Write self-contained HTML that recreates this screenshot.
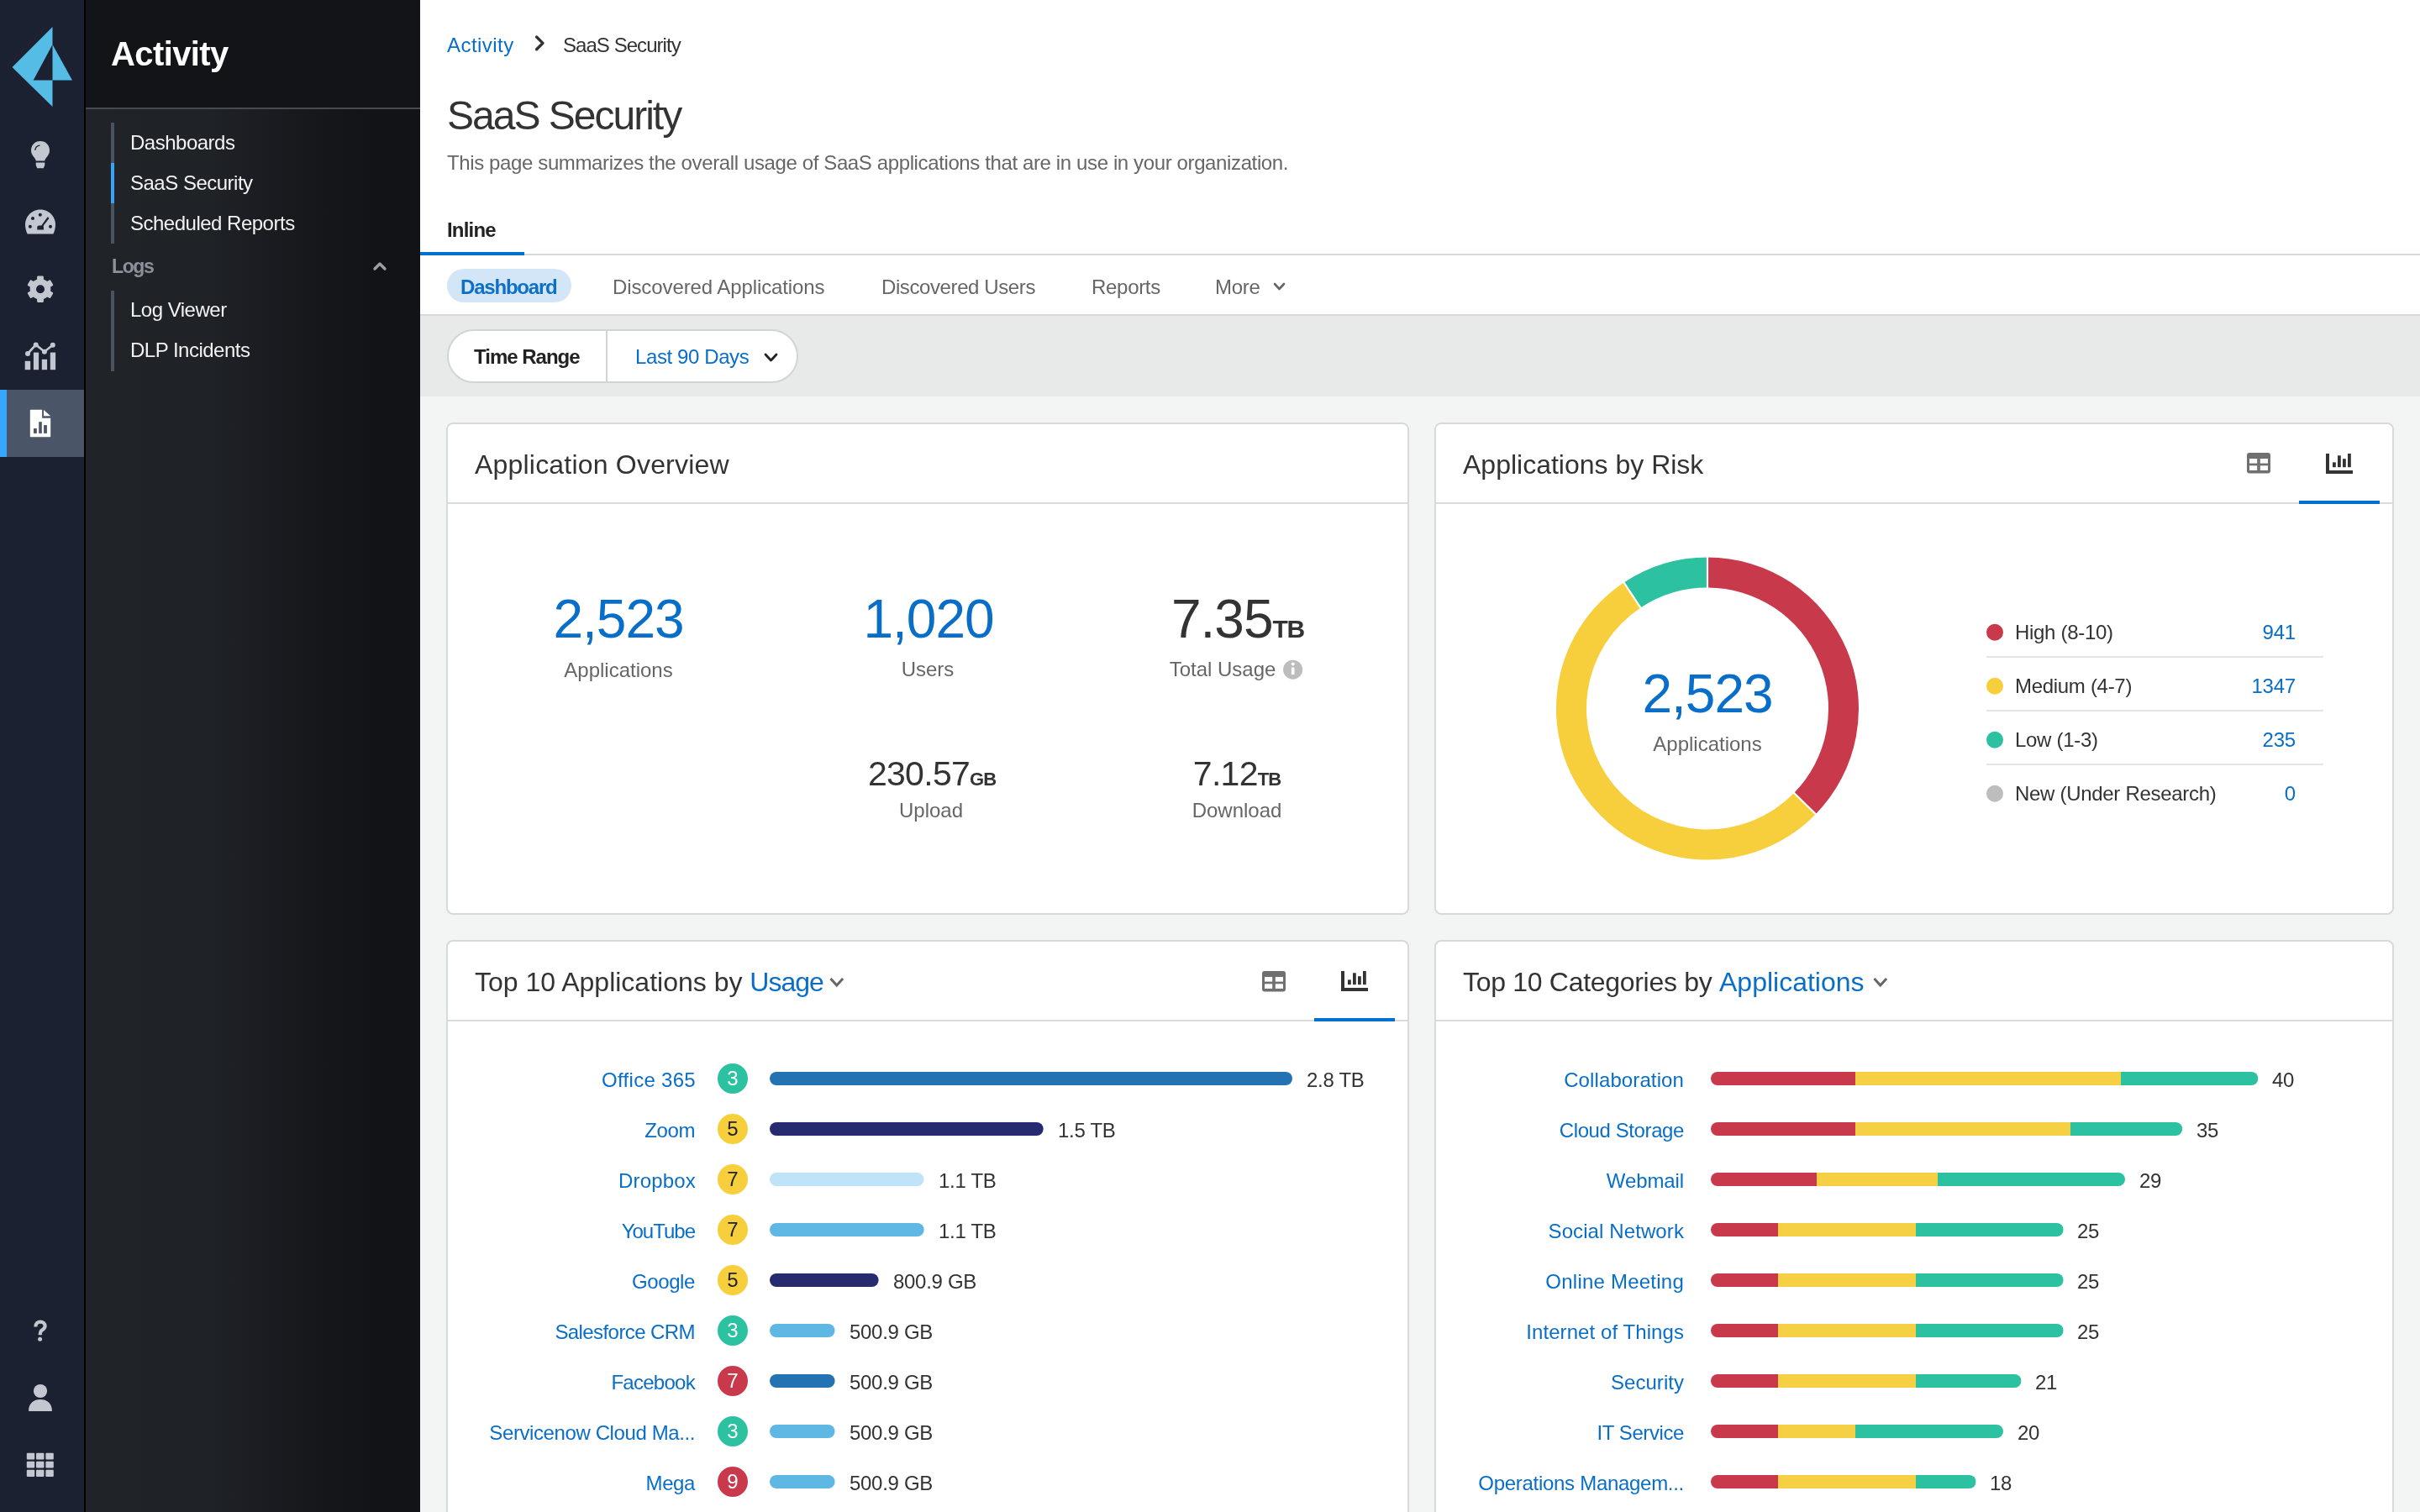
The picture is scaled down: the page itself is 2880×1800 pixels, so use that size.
<!DOCTYPE html>
<html><head><meta charset="utf-8"><title>SaaS Security</title>
<style>
html,body{margin:0;padding:0;}
body{width:2880px;height:1800px;overflow:hidden;position:relative;background:#f3f4f4;font-family:"Liberation Sans", sans-serif;}
.t{position:absolute;white-space:nowrap;line-height:1;will-change:transform;}
.r{position:absolute;}
svg{position:absolute;overflow:visible;}
@media (max-width:2000px){html{zoom:0.5;}}
</style></head><body>

<div class="r" style="left:0px;top:0px;width:100px;height:1800px;background:#1b2130;"></div>
<div class="r" style="left:100px;top:0px;width:2px;height:1800px;background:#000000;"></div>
<svg style="left:0;top:0" width="100" height="140"><path fill="#54bce5" d="M14.5 80 L62.5 32 L62.5 53 L39.7 95.5 L62.5 95.5 L62.5 127 Z"/><path fill="#54bce5" d="M62.5 53 L86 95.5 L62.5 95.5 Z"/></svg>
<div class="r" style="left:0px;top:464px;width:100px;height:80px;background:#4a5567;"></div>
<div class="r" style="left:0px;top:464px;width:8px;height:80px;background:#38a6fe;"></div>
<svg style="left:0;top:144px" width="100" height="80"><path fill="#c3c7cf" d="M48 24 C41.5 24 37 28.8 37 35 C37 38.5 38.6 41 40.5 43.3 C42 45.1 42.7 46.4 42.9 47.6 L53.1 47.6 C53.3 46.4 54 45.1 55.5 43.3 C57.4 41 59 38.5 59 35 C59 28.8 54.5 24 48 24 Z M42.7 49.6 L53.3 49.6 L53.3 52.5 L51.8 56.2 L44.2 56.2 L42.7 52.5 Z"/><path fill="none" stroke="#1b2130" stroke-width="1.3" stroke-linecap="round" d="M41.9 34.4 C42.3 31.5 44.3 29.6 47 29.2"/></svg>
<svg style="left:0;top:224px" width="100" height="80"><path fill="#c3c7cf" d="M48 25.6 C37.8 25.6 30 33.8 30 43.5 C30 47.6 31.1 51.2 32.6 54.4 L63.4 54.4 C64.9 51.2 66 47.6 66 43.5 C66 33.8 58.2 25.6 48 25.6 Z"/><g fill="#1b2130"><circle cx="47.8" cy="31.7" r="2"/><circle cx="39" cy="35.9" r="2"/><circle cx="35.9" cy="45.8" r="2"/><circle cx="60" cy="45.8" r="2"/><path d="M56.6 34.3 L58.6 35.8 L51.8 44.6 L52 49.5 L44.3 49.5 L44.3 46.5 C44.3 45.3 45.2 44.6 46.5 44.6 L49.3 44.6 Z"/></g></svg>
<svg style="left:0;top:304px" width="100" height="80"><g transform="translate(48 40.2)" fill="#c3c7cf"><circle r="12.3"/><rect x="-3.9" y="-15.8" width="7.8" height="8" rx="1.3" transform="rotate(0)"/><rect x="-3.9" y="-15.8" width="7.8" height="8" rx="1.3" transform="rotate(60)"/><rect x="-3.9" y="-15.8" width="7.8" height="8" rx="1.3" transform="rotate(120)"/><rect x="-3.9" y="-15.8" width="7.8" height="8" rx="1.3" transform="rotate(180)"/><rect x="-3.9" y="-15.8" width="7.8" height="8" rx="1.3" transform="rotate(240)"/><rect x="-3.9" y="-15.8" width="7.8" height="8" rx="1.3" transform="rotate(300)"/><circle r="5" fill="#1b2130"/></g></svg>
<svg style="left:0;top:384px" width="100" height="80"><g fill="#c3c7cf"><rect x="29.7" y="45.8" width="6.5" height="10.4"/><rect x="39.9" y="35.6" width="6.2" height="20.6"/><rect x="49.8" y="43.8" width="6.3" height="12.4"/><rect x="59.8" y="35.6" width="6.3" height="20.6"/><circle cx="33" cy="37" r="3"/><circle cx="42.7" cy="26.4" r="3"/><circle cx="52.9" cy="34.7" r="3"/><circle cx="62.8" cy="26.8" r="3"/></g><path fill="none" stroke="#c3c7cf" stroke-width="2.6" d="M33 37 L42.7 26.4 L52.9 34.7 L62.8 26.8"/></svg>
<svg style="left:0;top:464px" width="100" height="80"><path fill="#ffffff" d="M36.8 23.8 L50.1 23.8 L50.1 33.7 L60.2 33.7 L60.2 55.2 C60.2 55.8 59.8 56.2 59.2 56.2 L36.8 56.2 C36.2 56.2 35.8 55.8 35.8 55.2 L35.8 24.8 C35.8 24.2 36.2 23.8 36.8 23.8 Z M52 24 L60.2 31.2 L52 31.2 Z"/><g fill="#4a5567"><rect x="40" y="46" width="3.8" height="5.9"/><rect x="46.2" y="38.2" width="3.6" height="13.7"/><rect x="52.1" y="42.1" width="3.8" height="9.8"/></g></svg>
<svg style="left:0;top:1540px" width="100" height="260"><path fill="none" stroke="#c3c7cf" stroke-width="4.2" stroke-linecap="butt" d="M42.3 39.5 C42.3 35.5 45 33.6 48 33.6 C51.3 33.6 53.6 35.6 53.6 38.6 C53.6 41.6 51.2 42.6 49.6 43.8 C48.4 44.7 47.8 45.5 47.8 47.8 L47.8 49.2"/><circle cx="47.6" cy="54.2" r="2.5" fill="#c3c7cf"/>
<circle cx="48" cy="116" r="8.1" fill="#c3c7cf"/><path fill="#c3c7cf" d="M34 140 C34 130.5 40 126 48 126 C56 126 62 130.5 62 140 L62 139 C62 139.6 61.6 140 61 140 L35 140 C34.4 140 34 139.6 34 139 Z"/>
<g fill="#c3c7cf"><rect x="31.8" y="189.8" width="9.4" height="7.8" rx="1"/><rect x="43" y="189.8" width="9.4" height="7.8" rx="1"/><rect x="54.4" y="189.8" width="9.4" height="7.8" rx="1"/><rect x="31.8" y="199.8" width="9.4" height="7.8" rx="1"/><rect x="43" y="199.8" width="9.4" height="7.8" rx="1"/><rect x="54.4" y="199.8" width="9.4" height="7.8" rx="1"/><rect x="31.8" y="209.8" width="9.4" height="8.2" rx="1"/><rect x="43" y="209.8" width="9.4" height="8.2" rx="1"/><rect x="54.4" y="209.8" width="9.4" height="8.2" rx="1"/></g></svg>
<div class="r" style="left:102px;top:130px;width:398px;height:1670px;background:linear-gradient(90deg,#202328 0%,#1f2227 36%,#17181c 66%,#121316 88%,#121316 100%);"></div>
<div class="r" style="left:102px;top:0px;width:398px;height:128px;background:#131418;"></div>
<div class="r" style="left:102px;top:128px;width:398px;height:2px;background:#494a4e;"></div>
<div class="t" style="top:43.70px;font-size:40px;color:#ffffff;font-weight:700;letter-spacing:-0.6px;left:132.30px;">Activity</div>
<div class="r" style="left:132px;top:146px;width:4px;height:144px;background:#4b5363;"></div>
<div class="r" style="left:132px;top:194px;width:4px;height:48px;background:#39a3fa;"></div>
<div class="r" style="left:132px;top:346px;width:4px;height:96px;background:#4b5363;"></div>
<div class="t" style="top:157.90px;font-size:24px;color:#f2f2f2;letter-spacing:-0.5px;left:154.60px;">Dashboards</div>
<div class="t" style="top:205.90px;font-size:24px;color:#f2f2f2;letter-spacing:-0.5px;left:154.60px;">SaaS Security</div>
<div class="t" style="top:254.10px;font-size:24px;color:#f2f2f2;letter-spacing:-0.5px;left:154.60px;">Scheduled Reports</div>
<div class="t" style="top:306.25px;font-size:23px;color:#8c929b;font-weight:700;letter-spacing:-1.4px;left:132.80px;">Logs</div>
<svg style="left:0;top:0" width="500" height="400"><path fill="none" stroke="#9aa0a8" stroke-width="3.4" stroke-linecap="round" stroke-linejoin="round" d="M446 320 L452 314 L458 320"/></svg>
<div class="t" style="top:357.20px;font-size:24px;color:#f2f2f2;letter-spacing:-0.5px;left:154.60px;">Log Viewer</div>
<div class="t" style="top:404.60px;font-size:24px;color:#f2f2f2;letter-spacing:-0.5px;left:154.60px;">DLP Incidents</div>
<div class="r" style="left:500px;top:0px;width:2380px;height:374px;background:#ffffff;"></div>
<div class="t" style="top:41.60px;font-size:24px;color:#086ec8;letter-spacing:0.45px;left:532.20px;">Activity</div>
<svg style="left:0;top:0" width="700" height="80"><path fill="none" stroke="#333" stroke-width="3.4" stroke-linecap="round" stroke-linejoin="round" d="M638.6 44 L646 51.4 L638.6 58.8"/></svg>
<div class="t" style="top:41.60px;font-size:24px;color:#333333;letter-spacing:-0.95px;left:670.40px;">SaaS Security</div>
<div class="t" style="top:113.70px;font-size:48px;color:#333333;letter-spacing:-2.0px;left:532.00px;">SaaS Security</div>
<div class="t" style="top:181.80px;font-size:24px;color:#666666;letter-spacing:-0.38px;left:532.20px;">This page summarizes the overall usage of SaaS applications that are in use in your organization.</div>
<div class="t" style="top:261.60px;font-size:24px;color:#222222;font-weight:700;letter-spacing:-0.8px;left:532.00px;">Inline</div>
<div class="r" style="left:500px;top:302px;width:2380px;height:2px;background:#d7dadb;"></div>
<div class="r" style="left:500px;top:300px;width:124px;height:4px;background:#0070cf;"></div>
<div class="r" style="left:532px;top:320px;width:148px;height:40px;background:#d3e6f8;border-radius:20px;"></div>
<div class="t" style="top:329.60px;font-size:24px;color:#0d6fc6;font-weight:700;letter-spacing:-1.2px;left:548.00px;">Dashboard</div>
<div class="t" style="top:329.60px;font-size:24px;color:#666666;letter-spacing:-0.1px;left:729.30px;">Discovered Applications</div>
<div class="t" style="top:329.60px;font-size:24px;color:#666666;letter-spacing:-0.4px;left:1048.80px;">Discovered Users</div>
<div class="t" style="top:329.60px;font-size:24px;color:#666666;letter-spacing:-0.3px;left:1298.80px;">Reports</div>
<div class="t" style="top:329.60px;font-size:24px;color:#666666;letter-spacing:-0.3px;left:1446.30px;">More</div>
<svg style="left:0;top:0" width="1600" height="400"><path fill="none" stroke="#666" stroke-width="2.6" stroke-linecap="round" stroke-linejoin="round" d="M1517 338 L1522.5 344 L1528 338"/></svg>
<div class="r" style="left:500px;top:374px;width:2380px;height:2px;background:#d9dbdb;"></div>
<div class="r" style="left:500px;top:376px;width:2380px;height:96px;background:#e8e9e9;"></div>
<div class="r" style="left:532px;top:392px;width:414px;height:60px;background:#fff;border:2px solid #d2d5d5;border-radius:32px;"></div>
<div class="r" style="left:721px;top:394px;width:2px;height:60px;background:#d2d5d5;"></div>
<div class="t" style="top:413.20px;font-size:24px;color:#222222;font-weight:700;letter-spacing:-1.0px;left:563.50px;">Time Range</div>
<div class="t" style="top:413.20px;font-size:24px;color:#086ec8;letter-spacing:-0.4px;left:755.60px;">Last 90 Days</div>
<svg style="left:0;top:0" width="1000" height="500"><path fill="none" stroke="#222" stroke-width="2.8" stroke-linecap="round" stroke-linejoin="round" d="M911 422 L917.5 429 L924 422"/></svg>
<div class="r" style="left:531px;top:503px;width:1142px;height:582px;background:#fff;border:2px solid #d8d9d9;border-radius:8px;"></div>
<div class="r" style="left:533px;top:598px;width:1142px;height:2px;background:#dadbdb;"></div>
<div class="r" style="left:1707px;top:503px;width:1138px;height:582px;background:#fff;border:2px solid #d8d9d9;border-radius:8px;"></div>
<div class="r" style="left:1709px;top:598px;width:1138px;height:2px;background:#dadbdb;"></div>
<div class="r" style="left:531px;top:1119px;width:1142px;height:777px;background:#fff;border:2px solid #d8d9d9;border-radius:8px;"></div>
<div class="r" style="left:533px;top:1214px;width:1142px;height:2px;background:#dadbdb;"></div>
<div class="r" style="left:1707px;top:1119px;width:1138px;height:777px;background:#fff;border:2px solid #d8d9d9;border-radius:8px;"></div>
<div class="r" style="left:1709px;top:1214px;width:1138px;height:2px;background:#dadbdb;"></div>
<div class="t" style="top:537.00px;font-size:32px;color:#333333;letter-spacing:0.2px;left:564.50px;">Application Overview</div>
<div class="t" style="top:705.20px;font-size:64px;color:#086ec8;letter-spacing:-1px;left:-264.00px;width:2000px;text-align:center;">2,523</div>
<div class="t" style="top:785.60px;font-size:24px;color:#666666;left:-264.00px;width:2000px;text-align:center;">Applications</div>
<div class="t" style="top:705.10px;font-size:64px;color:#086ec8;letter-spacing:-1px;left:105.40px;width:2000px;text-align:center;">1,020</div>
<div class="t" style="top:785.40px;font-size:24px;color:#666666;left:104.00px;width:2000px;text-align:center;">Users</div>
<div class="t" style="left:1073px;width:800px;text-align:center;top:705.10px;font-size:64px;color:#333;letter-spacing:-1px">7.35<span style="font-size:30px;font-weight:700;letter-spacing:-1.2px">TB</span></div>
<div class="t" style="left:1072px;width:800px;text-align:center;top:785.40px;font-size:24px;color:#666;">Total Usage<span style="display:inline-block;width:34px"></span></div>
<svg style="left:0;top:0" width="1600" height="900"><circle cx="1538.6" cy="797.2" r="11.5" fill="#bdbdbd"/><rect x="1536.9" y="794.5" width="3.6" height="8.5" fill="#fff"/><circle cx="1538.7" cy="790.5" r="2" fill="#fff"/></svg>
<div class="t" style="left:708.5px;width:800px;text-align:center;top:901.15px;font-size:41px;color:#333;letter-spacing:-0.7px">230.57<span style="font-size:22px;font-weight:700;letter-spacing:-1px">GB</span></div>
<div class="t" style="top:953.20px;font-size:24px;color:#666666;left:108.00px;width:2000px;text-align:center;">Upload</div>
<div class="t" style="left:1072px;width:800px;text-align:center;top:901.15px;font-size:41px;color:#333;letter-spacing:-0.7px">7.12<span style="font-size:22px;font-weight:700;letter-spacing:-1px">TB</span></div>
<div class="t" style="top:953.20px;font-size:24px;color:#666666;left:472.00px;width:2000px;text-align:center;">Download</div>
<div class="t" style="top:537.10px;font-size:32px;color:#333333;left:1740.50px;">Applications by Risk</div>
<svg style="left:2674px;top:539px" width="28" height="25"><rect x="0" y="0" width="28" height="24.5" rx="3" fill="#707070"/><g fill="#fff"><rect x="3" y="7" width="9.2" height="5.6"/><rect x="15.8" y="7" width="9.2" height="5.6"/><rect x="3" y="15.3" width="9.2" height="5.6"/><rect x="15.8" y="15.3" width="9.2" height="5.6"/></g></svg>
<svg style="left:2768px;top:540px" width="32" height="24"><g fill="#333"><rect x="0" y="0" width="4" height="24"/><rect x="0" y="20" width="32" height="4"/><rect x="8" y="10.4" width="3.8" height="5.8"/><rect x="14" y="2.3" width="3.8" height="13.9"/><rect x="20" y="6.2" width="3.8" height="10"/><rect x="26" y="0" width="3.8" height="16.2"/></g></svg>
<div class="r" style="left:2736px;top:596px;width:96px;height:4px;background:#0070cf;"></div>
<svg style="left:0;top:0" width="2880" height="1100"><path fill="#c8394b" d="M2032.00 663.50 A180 180 0 0 1 2160.89 969.14 L2135.11 944.02 A144 144 0 0 0 2032.00 699.50 Z"/><path fill="#f7cf3c" d="M2160.89 969.14 A180 180 0 1 1 1932.57 693.46 L1952.46 723.46 A144 144 0 1 0 2135.11 944.02 Z"/><path fill="#2cc1a1" d="M1932.57 693.46 A180 180 0 0 1 2032.00 663.50 L2032.00 699.50 A144 144 0 0 0 1952.46 723.46 Z"/><line x1="2032.00" y1="703.50" x2="2032.00" y2="659.50" stroke="#fff" stroke-width="2.2"/><line x1="2132.25" y1="941.22" x2="2163.76" y2="971.94" stroke="#fff" stroke-width="2.2"/><line x1="1954.66" y1="726.80" x2="1930.36" y2="690.12" stroke="#fff" stroke-width="2.2"/></svg>
<div class="t" style="top:793.60px;font-size:64px;color:#086ec8;letter-spacing:-1px;left:1032.00px;width:2000px;text-align:center;">2,523</div>
<div class="t" style="top:873.60px;font-size:24px;color:#666666;left:1032.00px;width:2000px;text-align:center;">Applications</div>
<svg style="left:0;top:0" width="2880" height="1100"><circle cx="2374" cy="752.7" r="10" fill="#c8394b"/></svg>
<div class="t" style="top:741.30px;font-size:24px;color:#333333;letter-spacing:-0.3px;left:2397.50px;">High (8-10)</div>
<div class="t" style="top:741.30px;font-size:24px;color:#086ec8;letter-spacing:-0.2px;left:1231.50px;width:1500px;text-align:right;">941</div>
<div class="r" style="left:2364px;top:781px;width:401px;height:2px;background:#e4e5e5;"></div>
<svg style="left:0;top:0" width="2880" height="1100"><circle cx="2374" cy="816.7" r="10" fill="#f7cf3c"/></svg>
<div class="t" style="top:805.30px;font-size:24px;color:#333333;letter-spacing:-0.3px;left:2397.50px;">Medium (4-7)</div>
<div class="t" style="top:805.30px;font-size:24px;color:#086ec8;letter-spacing:-0.2px;left:1231.50px;width:1500px;text-align:right;">1347</div>
<div class="r" style="left:2364px;top:845px;width:401px;height:2px;background:#e4e5e5;"></div>
<svg style="left:0;top:0" width="2880" height="1100"><circle cx="2374" cy="880.7" r="10" fill="#2cc1a1"/></svg>
<div class="t" style="top:869.30px;font-size:24px;color:#333333;letter-spacing:-0.3px;left:2397.50px;">Low (1-3)</div>
<div class="t" style="top:869.30px;font-size:24px;color:#086ec8;letter-spacing:-0.2px;left:1231.50px;width:1500px;text-align:right;">235</div>
<div class="r" style="left:2364px;top:909px;width:401px;height:2px;background:#e4e5e5;"></div>
<svg style="left:0;top:0" width="2880" height="1100"><circle cx="2374" cy="944.7" r="10" fill="#bdbdbd"/></svg>
<div class="t" style="top:933.30px;font-size:24px;color:#333333;letter-spacing:-0.3px;left:2397.50px;">New (Under Research)</div>
<div class="t" style="top:933.30px;font-size:24px;color:#086ec8;letter-spacing:-0.2px;left:1231.50px;width:1500px;text-align:right;">0</div>
<div class="t" style="left:564.9px;top:1153.30px;font-size:32px;color:#333;letter-spacing:0px">Top 10 Applications by <span style="color:#086ec8;letter-spacing:-1px">Usage</span></div>
<svg style="left:0;top:0" width="1100" height="1300"><path fill="none" stroke="#666" stroke-width="3" d="M988.5 1165 L995.8 1173 L1003.1 1165"/></svg>
<svg style="left:1502px;top:1156px" width="28" height="25"><rect x="0" y="0" width="28" height="24.5" rx="3" fill="#707070"/><g fill="#fff"><rect x="3" y="7" width="9.2" height="5.6"/><rect x="15.8" y="7" width="9.2" height="5.6"/><rect x="3" y="15.3" width="9.2" height="5.6"/><rect x="15.8" y="15.3" width="9.2" height="5.6"/></g></svg>
<svg style="left:1596px;top:1156px" width="32" height="24"><g fill="#333"><rect x="0" y="0" width="4" height="24"/><rect x="0" y="20" width="32" height="4"/><rect x="8" y="10.4" width="3.8" height="5.8"/><rect x="14" y="2.3" width="3.8" height="13.9"/><rect x="20" y="6.2" width="3.8" height="10"/><rect x="26" y="0" width="3.8" height="16.2"/></g></svg>
<div class="r" style="left:1564px;top:1212px;width:96px;height:4px;background:#0070cf;"></div>
<svg style="left:0;top:0" width="2880" height="1900"><circle cx="872" cy="1284" r="18" fill="#2cc1a1"/><rect x="916" y="1276" width="622.0" height="16" rx="8" fill="#2373b3"/><circle cx="872" cy="1344" r="18" fill="#f7cf3c"/><rect x="916" y="1336" width="325.7" height="16" rx="8" fill="#262b70"/><circle cx="872" cy="1404" r="18" fill="#f7cf3c"/><rect x="916" y="1396" width="183.5" height="16" rx="8" fill="#bfe3f7"/><circle cx="872" cy="1464" r="18" fill="#f7cf3c"/><rect x="916" y="1456" width="183.7" height="16" rx="8" fill="#5eb8e3"/><circle cx="872" cy="1524" r="18" fill="#f7cf3c"/><rect x="916" y="1516" width="129.6" height="16" rx="8" fill="#262b70"/><circle cx="872" cy="1584" r="18" fill="#2cc1a1"/><rect x="916" y="1576" width="77.6" height="16" rx="8" fill="#5eb8e3"/><circle cx="872" cy="1644" r="18" fill="#c8394b"/><rect x="916" y="1636" width="77.6" height="16" rx="8" fill="#2373b3"/><circle cx="872" cy="1704" r="18" fill="#2cc1a1"/><rect x="916" y="1696" width="77.6" height="16" rx="8" fill="#5eb8e3"/><circle cx="872" cy="1764" r="18" fill="#c8394b"/><rect x="916" y="1756" width="77.6" height="16" rx="8" fill="#5eb8e3"/><circle cx="872" cy="1824" r="18" fill="#2cc1a1"/><rect x="916" y="1816" width="77.6" height="16" rx="8" fill="#5eb8e3"/></svg>
<div class="t" style="top:1273.60px;font-size:24px;color:#086ec8;letter-spacing:0.3px;left:-672.10px;width:1500px;text-align:right;">Office 365</div>
<div class="t" style="top:1272.10px;font-size:24px;color:#fff;left:-128.00px;width:2000px;text-align:center;">3</div>
<div class="t" style="top:1273.60px;font-size:24px;color:#333333;letter-spacing:-0.3px;left:1555.00px;">2.8 TB</div>
<div class="t" style="top:1333.60px;font-size:24px;color:#086ec8;letter-spacing:-0.4px;left:-672.80px;width:1500px;text-align:right;">Zoom</div>
<div class="t" style="top:1332.10px;font-size:24px;color:#222;left:-128.00px;width:2000px;text-align:center;">5</div>
<div class="t" style="top:1333.60px;font-size:24px;color:#333333;letter-spacing:-0.3px;left:1258.70px;">1.5 TB</div>
<div class="t" style="top:1393.60px;font-size:24px;color:#086ec8;letter-spacing:0.17px;left:-672.23px;width:1500px;text-align:right;">Dropbox</div>
<div class="t" style="top:1392.10px;font-size:24px;color:#222;left:-128.00px;width:2000px;text-align:center;">7</div>
<div class="t" style="top:1393.60px;font-size:24px;color:#333333;letter-spacing:-0.3px;left:1116.50px;">1.1 TB</div>
<div class="t" style="top:1453.60px;font-size:24px;color:#086ec8;letter-spacing:-1.0px;left:-673.40px;width:1500px;text-align:right;">YouTube</div>
<div class="t" style="top:1452.10px;font-size:24px;color:#222;left:-128.00px;width:2000px;text-align:center;">7</div>
<div class="t" style="top:1453.60px;font-size:24px;color:#333333;letter-spacing:-0.3px;left:1116.70px;">1.1 TB</div>
<div class="t" style="top:1513.60px;font-size:24px;color:#086ec8;letter-spacing:-0.4px;left:-672.80px;width:1500px;text-align:right;">Google</div>
<div class="t" style="top:1512.10px;font-size:24px;color:#222;left:-128.00px;width:2000px;text-align:center;">5</div>
<div class="t" style="top:1513.60px;font-size:24px;color:#333333;letter-spacing:-0.3px;left:1062.60px;">800.9 GB</div>
<div class="t" style="top:1573.60px;font-size:24px;color:#086ec8;letter-spacing:-0.58px;left:-672.98px;width:1500px;text-align:right;">Salesforce CRM</div>
<div class="t" style="top:1572.10px;font-size:24px;color:#fff;left:-128.00px;width:2000px;text-align:center;">3</div>
<div class="t" style="top:1573.60px;font-size:24px;color:#333333;letter-spacing:-0.3px;left:1010.60px;">500.9 GB</div>
<div class="t" style="top:1633.60px;font-size:24px;color:#086ec8;letter-spacing:-0.73px;left:-673.13px;width:1500px;text-align:right;">Facebook</div>
<div class="t" style="top:1632.10px;font-size:24px;color:#fff;left:-128.00px;width:2000px;text-align:center;">7</div>
<div class="t" style="top:1633.60px;font-size:24px;color:#333333;letter-spacing:-0.3px;left:1010.60px;">500.9 GB</div>
<div class="t" style="top:1693.60px;font-size:24px;color:#086ec8;letter-spacing:-0.4px;left:-672.80px;width:1500px;text-align:right;">Servicenow Cloud Ma...</div>
<div class="t" style="top:1692.10px;font-size:24px;color:#fff;left:-128.00px;width:2000px;text-align:center;">3</div>
<div class="t" style="top:1693.60px;font-size:24px;color:#333333;letter-spacing:-0.3px;left:1010.60px;">500.9 GB</div>
<div class="t" style="top:1753.60px;font-size:24px;color:#086ec8;letter-spacing:-0.4px;left:-672.80px;width:1500px;text-align:right;">Mega</div>
<div class="t" style="top:1752.10px;font-size:24px;color:#fff;left:-128.00px;width:2000px;text-align:center;">9</div>
<div class="t" style="top:1753.60px;font-size:24px;color:#333333;letter-spacing:-0.3px;left:1010.60px;">500.9 GB</div>
<div class="t" style="top:1813.60px;font-size:24px;color:#086ec8;letter-spacing:-0.4px;left:-672.80px;width:1500px;text-align:right;">Box</div>
<div class="t" style="top:1812.10px;font-size:24px;color:#fff;left:-128.00px;width:2000px;text-align:center;">3</div>
<div class="t" style="top:1813.60px;font-size:24px;color:#333333;letter-spacing:-0.3px;left:1010.60px;">500.9 GB</div>
<div class="t" style="left:1741.4px;top:1153.30px;font-size:32px;color:#333;letter-spacing:-0.3px">Top 10 Categories by <span style="color:#086ec8;letter-spacing:0px">Applications</span></div>
<svg style="left:0;top:0" width="2300" height="1300"><path fill="none" stroke="#666" stroke-width="3" d="M2230.5 1165 L2237.8 1173 L2245.1 1165"/></svg>
<svg style="left:0;top:0" width="2880" height="1900"><clipPath id="cc0"><rect x="2036" y="1276" width="651.4" height="16" rx="8"/></clipPath><g clip-path="url(#cc0)"><rect x="2036" y="1276" width="172" height="16" fill="#c8394b"/><rect x="2208" y="1276" width="316" height="16" fill="#f6d044"/><rect x="2524" y="1276" width="163.4" height="16" fill="#2cc1a1"/></g><clipPath id="cc1"><rect x="2036" y="1336" width="561.2" height="16" rx="8"/></clipPath><g clip-path="url(#cc1)"><rect x="2036" y="1336" width="172" height="16" fill="#c8394b"/><rect x="2208" y="1336" width="256" height="16" fill="#f6d044"/><rect x="2464" y="1336" width="133.2" height="16" fill="#2cc1a1"/></g><clipPath id="cc2"><rect x="2036" y="1396" width="493.0" height="16" rx="8"/></clipPath><g clip-path="url(#cc2)"><rect x="2036" y="1396" width="126" height="16" fill="#c8394b"/><rect x="2162" y="1396" width="144" height="16" fill="#f6d044"/><rect x="2306" y="1396" width="223.0" height="16" fill="#2cc1a1"/></g><clipPath id="cc3"><rect x="2036" y="1456" width="419.7" height="16" rx="8"/></clipPath><g clip-path="url(#cc3)"><rect x="2036" y="1456" width="80" height="16" fill="#c8394b"/><rect x="2116" y="1456" width="164" height="16" fill="#f6d044"/><rect x="2280" y="1456" width="175.7" height="16" fill="#2cc1a1"/></g><clipPath id="cc4"><rect x="2036" y="1516" width="419.7" height="16" rx="8"/></clipPath><g clip-path="url(#cc4)"><rect x="2036" y="1516" width="80" height="16" fill="#c8394b"/><rect x="2116" y="1516" width="164" height="16" fill="#f6d044"/><rect x="2280" y="1516" width="175.7" height="16" fill="#2cc1a1"/></g><clipPath id="cc5"><rect x="2036" y="1576" width="419.7" height="16" rx="8"/></clipPath><g clip-path="url(#cc5)"><rect x="2036" y="1576" width="80" height="16" fill="#c8394b"/><rect x="2116" y="1576" width="164" height="16" fill="#f6d044"/><rect x="2280" y="1576" width="175.7" height="16" fill="#2cc1a1"/></g><clipPath id="cc6"><rect x="2036" y="1636" width="369.5" height="16" rx="8"/></clipPath><g clip-path="url(#cc6)"><rect x="2036" y="1636" width="80" height="16" fill="#c8394b"/><rect x="2116" y="1636" width="164" height="16" fill="#f6d044"/><rect x="2280" y="1636" width="125.5" height="16" fill="#2cc1a1"/></g><clipPath id="cc7"><rect x="2036" y="1696" width="348.0" height="16" rx="8"/></clipPath><g clip-path="url(#cc7)"><rect x="2036" y="1696" width="80" height="16" fill="#c8394b"/><rect x="2116" y="1696" width="92" height="16" fill="#f6d044"/><rect x="2208" y="1696" width="176.0" height="16" fill="#2cc1a1"/></g><clipPath id="cc8"><rect x="2036" y="1756" width="315.6" height="16" rx="8"/></clipPath><g clip-path="url(#cc8)"><rect x="2036" y="1756" width="80" height="16" fill="#c8394b"/><rect x="2116" y="1756" width="164" height="16" fill="#f6d044"/><rect x="2280" y="1756" width="71.6" height="16" fill="#2cc1a1"/></g><clipPath id="cc9"><rect x="2036" y="1816" width="315.6" height="16" rx="8"/></clipPath><g clip-path="url(#cc9)"><rect x="2036" y="1816" width="80" height="16" fill="#c8394b"/><rect x="2116" y="1816" width="164" height="16" fill="#f6d044"/><rect x="2280" y="1816" width="71.6" height="16" fill="#2cc1a1"/></g></svg>
<div class="t" style="top:1273.60px;font-size:24px;color:#086ec8;letter-spacing:0.11px;left:504.01px;width:1500px;text-align:right;">Collaboration</div>
<div class="t" style="top:1273.60px;font-size:24px;color:#333333;letter-spacing:-0.3px;left:2703.90px;">40</div>
<div class="t" style="top:1333.60px;font-size:24px;color:#086ec8;letter-spacing:-0.4px;left:503.50px;width:1500px;text-align:right;">Cloud Storage</div>
<div class="t" style="top:1333.60px;font-size:24px;color:#333333;letter-spacing:-0.3px;left:2613.70px;">35</div>
<div class="t" style="top:1393.60px;font-size:24px;color:#086ec8;letter-spacing:-0.11px;left:503.79px;width:1500px;text-align:right;">Webmail</div>
<div class="t" style="top:1393.60px;font-size:24px;color:#333333;letter-spacing:-0.3px;left:2545.50px;">29</div>
<div class="t" style="top:1453.60px;font-size:24px;color:#086ec8;letter-spacing:0.1px;left:504.00px;width:1500px;text-align:right;">Social Network</div>
<div class="t" style="top:1453.60px;font-size:24px;color:#333333;letter-spacing:-0.3px;left:2472.20px;">25</div>
<div class="t" style="top:1513.60px;font-size:24px;color:#086ec8;letter-spacing:0.23px;left:504.13px;width:1500px;text-align:right;">Online Meeting</div>
<div class="t" style="top:1513.60px;font-size:24px;color:#333333;letter-spacing:-0.3px;left:2472.20px;">25</div>
<div class="t" style="top:1573.60px;font-size:24px;color:#086ec8;letter-spacing:0.08px;left:503.98px;width:1500px;text-align:right;">Internet of Things</div>
<div class="t" style="top:1573.60px;font-size:24px;color:#333333;letter-spacing:-0.3px;left:2472.20px;">25</div>
<div class="t" style="top:1633.60px;font-size:24px;color:#086ec8;letter-spacing:0.04px;left:503.94px;width:1500px;text-align:right;">Security</div>
<div class="t" style="top:1633.60px;font-size:24px;color:#333333;letter-spacing:-0.3px;left:2422.00px;">21</div>
<div class="t" style="top:1693.60px;font-size:24px;color:#086ec8;letter-spacing:-0.4px;left:503.50px;width:1500px;text-align:right;">IT Service</div>
<div class="t" style="top:1693.60px;font-size:24px;color:#333333;letter-spacing:-0.3px;left:2400.50px;">20</div>
<div class="t" style="top:1753.60px;font-size:24px;color:#086ec8;letter-spacing:-0.29px;left:503.61px;width:1500px;text-align:right;">Operations Managem...</div>
<div class="t" style="top:1753.60px;font-size:24px;color:#333333;letter-spacing:-0.3px;left:2368.10px;">18</div>
<div class="t" style="top:1813.60px;font-size:24px;color:#086ec8;letter-spacing:-0.4px;left:503.50px;width:1500px;text-align:right;">Other</div>
<div class="t" style="top:1813.60px;font-size:24px;color:#333333;letter-spacing:-0.3px;left:2368.10px;">18</div>
</body></html>
